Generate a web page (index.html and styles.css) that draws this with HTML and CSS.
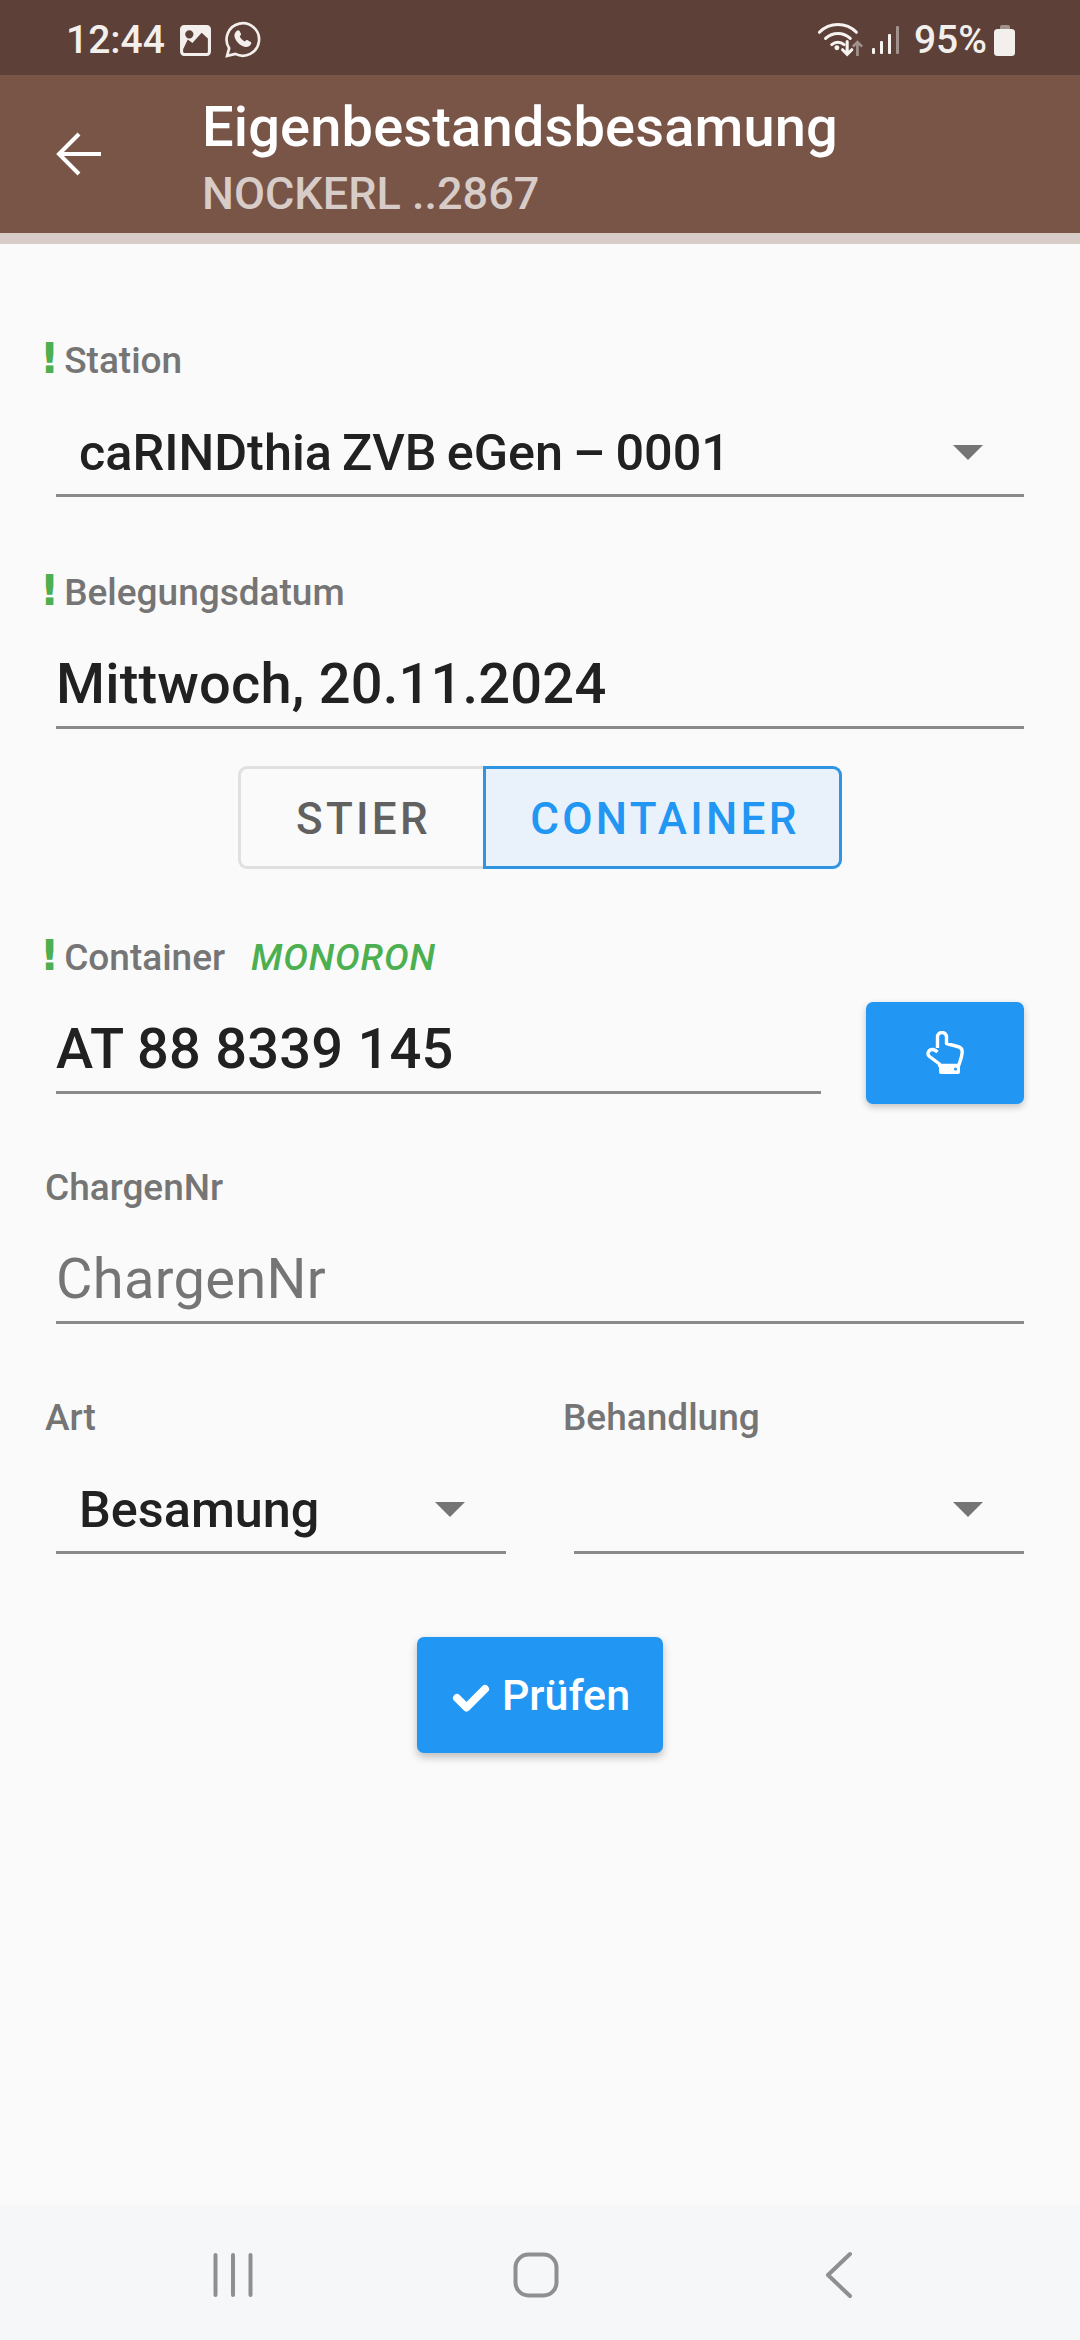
FILE: index.html
```html
<!DOCTYPE html>
<html lang="en">
<head>
    <meta charset="UTF-8">
    <meta name="viewport" content="width=device-width, initial-scale=1.0">
    <title>Eigenbestandsbesamung</title>
    <link rel="stylesheet" href="styles.css">
</head>
<body>
    <div class="phone">
        <!-- Status bar -->
        <div class="status-bar">
            <div class="status-left">
                <span class="clock">12:44</span>
                <svg class="status-icon" width="33" height="33" viewBox="0 0 32 32">
                    <path fill="#f3efed" fill-rule="evenodd" d="M5 1h22a4 4 0 0 1 4 4v22a4 4 0 0 1-4 4H5a4 4 0 0 1-4-4V5a4 4 0 0 1 4-4zM4 24.500V27a1 1 0 0 0 1 1h22a1 1 0 0 0 1-1v-13l-6-5.500-9 10-4.500-3.500zM10 6a4 4 0 1 0 0 8 4 4 0 0 0 0-8z"/>
                </svg>
                <svg class="status-icon" width="37" height="38" viewBox="0 0 36 37">
                    <path fill="none" stroke="#f3efed" stroke-width="2.600" d="M3 34l2-7.500A15.800 15.800 0 1 1 11 32z"/>
                    <path fill="#f3efed" d="M12.500 9.500c1-.8 2-.7 2.500 0l1.500 3c.3.700 0 1.300-1.200 2.700 1 2 2.700 3.700 5 4.800 1.500-1.500 2-1.700 2.700-1.300l3 1.700c.7.400.7 1.300.2 2.300-1 2-3.500 3-6 2.300-5-1.300-9-5.500-10-10-.4-2 .6-4 2.300-5.500z"/>
                </svg>
            </div>
            <div class="status-right">
                <svg width="48" height="37" viewBox="0 0 46 36">
                    <g fill="none" stroke="#f6f3f1" stroke-width="3" stroke-linecap="round">
                        <path d="M2 10C12 0 28 0 38 10"/>
                        <path d="M8 16c7-6.500 17-6.500 24 0"/>
                        <path d="M14 22c3.500-3 8.500-3 12 0"/>
                        <path d="M29 19v12M24.500 27l4.500 4.500 4.500-4.500"/>
                    </g>
                    <circle cx="19" cy="25" r="2.400" fill="#f6f3f1"/>
                    <path fill="none" stroke="#a1928c" stroke-width="2.600" d="M39 33V20M34.500 24l4.500-4.500 4.500 4.500"/>
                </svg>
                <svg class="signal" width="28" height="30" viewBox="0 0 28 30">
                    <rect x="1" y="23" width="3" height="6" rx="1" fill="#f6f3f1"/>
                    <rect x="9" y="16" width="3" height="13" rx="1" fill="#f6f3f1"/>
                    <rect x="17" y="9" width="3" height="20" rx="1" fill="#f6f3f1"/>
                    <rect x="25" y="1" width="3" height="28" rx="1" fill="#a1928c"/>
                </svg>
                <span class="battery-text">95%</span>
                <svg class="battery" width="22" height="32" viewBox="0 0 22 32">
                    <path fill="#a1928c" d="M6 3a2 2 0 0 1 2-2h6a2 2 0 0 1 2 2v3H6z"/>
                    <rect x="0" y="5" width="21" height="27" rx="3.500" fill="#f3efed"/>
                </svg>
            </div>
        </div>

        <!-- App bar -->
        <header class="app-bar">
            <svg class="back-icon" width="46" height="46" viewBox="0 0 46 46">
                <path fill="none" stroke="#fff" stroke-width="4" d="M45 23H4M23 3L3 23l20 20"/>
            </svg>
            <div class="app-titles">
                <h1>Eigenbestandsbesamung</h1>
                <p>NOCKERL ..2867</p>
            </div>
        </header>
        <div class="app-strip"></div>

        <main class="form">
            <div class="field field-wide-gap">
                <label class="field-label"><span class="required">!</span>Station</label>
                <div class="control select">
                    <span class="value">caRINDthia ZVB eGen – 0001</span>
                    <span class="arrow"></span>
                </div>
            </div>

            <div class="field field-wide-gap">
                <label class="field-label"><span class="required">!</span>Belegungsdatum</label>
                <div class="control">
                    <span class="value">Mittwoch, 20.11.2024</span>
                </div>
            </div>

            <div class="toggle">
                <button class="toggle-btn">STIER</button>
                <button class="toggle-btn active">CONTAINER</button>
            </div>

            <div class="field">
                <label class="field-label"><span class="required">!</span>Container<em class="hint">MONORON</em></label>
                <div class="control-row">
                    <div class="control">
                        <span class="value">AT 88 8339 145</span>
                    </div>
                    <button class="scan-btn">
                        <svg width="38" height="44" viewBox="0 0 38 44">
                            <path fill="none" stroke="#fff" stroke-width="3.400" stroke-linejoin="round" d="M11.500 17V6a4.500 4.500 0 0 1 9 0v6.500l11 3c3 .8 4.700 2.500 4.700 5 0 5-2 9-3.500 14H13.500V33L3.500 25.500c-3.200-2.700-.5-7.500 3.500-7 2 .3 3 1 4.500 2.500"/>
                            <path fill="#fff" fill-rule="evenodd" d="M13 34h21v7a2 2 0 0 1-2 2H15a2 2 0 0 1-2-2zm16.500 2.500a1.500 1.500 0 1 0 0 3 1.500 1.500 0 0 0 0-3z"/>
                        </svg>
                    </button>
                </div>
            </div>

            <div class="field">
                <label class="field-label">ChargenNr</label>
                <div class="control">
                    <span class="value placeholder">ChargenNr</span>
                </div>
            </div>

            <div class="field-pair">
                <div class="field">
                    <label class="field-label">Art</label>
                    <div class="control select">
                        <span class="value">Besamung</span>
                        <span class="arrow"></span>
                    </div>
                </div>
                <div class="field">
                    <label class="field-label">Behandlung</label>
                    <div class="control select">
                        <span class="value"></span>
                        <span class="arrow"></span>
                    </div>
                </div>
            </div>

            <div class="actions">
                <button class="check-btn">
                    <svg class="check-icon" width="38" height="30" viewBox="0 0 38 30">
                        <path fill="none" stroke="#fff" stroke-width="8" stroke-linecap="round" stroke-linejoin="round" d="M5 15l9.500 9.500L33 6"/>
                    </svg>
                    Prüfen
                </button>
            </div>
        </main>

        <!-- Navigation bar -->
        <nav class="nav-bar">
            <svg width="44" height="44" viewBox="0 0 44 44">
                <path fill="none" stroke="#8f8f8f" stroke-width="4" stroke-linecap="round" d="M4.500 2v40M22 2v40M39.500 2v40"/>
            </svg>
            <svg width="46" height="46" viewBox="0 0 46 46">
                <rect x="2.500" y="2.500" width="41" height="41" rx="13" fill="none" stroke="#8f8f8f" stroke-width="4"/>
            </svg>
            <svg width="30" height="48" viewBox="0 0 30 48">
                <path fill="none" stroke="#8f8f8f" stroke-width="4" stroke-linecap="round" stroke-linejoin="round" d="M26 3L4 24l22 21"/>
            </svg>
        </nav>
    </div>
</body>
</html>
```

FILE: styles.css
```css
/* General Styles */
html, body {
    margin: 0;
    padding: 0;
}

body {
    font-family: Roboto, "Noto Sans", sans-serif;
    background-color: #fafafa;
    color: #212121;
}

.phone {
    width: 1080px;
    height: 2340px;
    display: flex;
    flex-direction: column;
    overflow: hidden;
}

/* Status Bar */
.status-bar {
    height: 75px;
    box-sizing: border-box;
    background-color: #5d4037;
    color: #f3efed;
    display: flex;
    align-items: center;
    justify-content: space-between;
    padding: 5px 64px 0 66px;
    flex-shrink: 0;
}

.status-left,
.status-right {
    display: flex;
    align-items: center;
}

.clock {
    font-size: 39px;
    font-weight: 500;
    margin-right: 14px;
}

.status-icon {
    margin-right: 12px;
}

.signal {
    margin-left: 6px;
}

.battery-text {
    font-size: 39px;
    font-weight: 500;
    margin-left: 15px;
    margin-right: 7px;
}

/* App Bar */
.app-bar {
    height: 158px;
    background-color: #795548;
    display: flex;
    align-items: center;
    flex-shrink: 0;
    color: #fff;
}

.back-icon {
    margin-left: 56px;
    margin-right: 100px;
}

.app-titles {
    padding-top: 8px;
}

.app-titles h1 {
    margin: 0;
    font-size: 56px;
    font-weight: 500;
    line-height: 60px;
    letter-spacing: 0.15px;
}

.app-titles p {
    margin: 12px 0 0;
    font-size: 45px;
    font-weight: 500;
    line-height: 50px;
    color: #d7ccc8;
}

.app-strip {
    height: 11px;
    background-color: #d7ccc8;
    flex-shrink: 0;
}

/* Form */
.form {
    flex: 1;
    padding: 97px 56px 0 45px;
}

.field {
    margin-bottom: 74px;
}

.field-wide-gap {
    margin-bottom: 76px;
}

.field-label {
    display: flex;
    align-items: baseline;
    height: 40px;
    font-size: 37px;
    font-weight: 500;
    line-height: 40px;
    color: #757575;
}

.required {
    font-family: "DejaVu Sans", sans-serif;
    color: #4caf50;
    font-weight: 700;
    font-size: 42px;
    line-height: 30px;
    margin: 0 5px 0 -5px;
}

.hint {
    color: #4caf50;
    margin-left: 26px;
    font-style: italic;
    letter-spacing: 0.8px;
}

.control {
    height: 116px;
    margin-left: 11px;
    border-bottom: 3px solid #8a8a8a;
    box-sizing: border-box;
    display: flex;
    align-items: center;
    justify-content: space-between;
    padding-top: 31px;
    padding-bottom: 2px;
}

.value {
    font-size: 56px;
    font-weight: 500;
    letter-spacing: 0.2px;
}

.placeholder {
    color: #757575;
    font-weight: 400;
    letter-spacing: 0.3px;
}

.select .value {
    font-size: 50.4px;
    letter-spacing: 0;
    word-spacing: -2.500px;
    margin-left: 23px;
}

.arrow {
    width: 0;
    height: 0;
    border-left: 15px solid transparent;
    border-right: 15px solid transparent;
    border-top: 15px solid #757575;
    margin-right: 41px;
}

/* Toggle */
.toggle {
    display: flex;
    justify-content: center;
    margin: -39px 0 69px 11px;
}

.toggle-btn {
    height: 103px;
    font-family: inherit;
    font-size: 44px;
    font-weight: 500;
    letter-spacing: 3.300px;
    box-sizing: border-box;
    padding: 2px 0 0 3px;
    background-color: #fafafa;
    color: #616161;
    border: 3px solid #e0e0e0;
    border-right: none;
    border-radius: 9px 0 0 9px;
    width: 245px;
}

.toggle-btn.active {
    width: 359px;
    padding-left: 5px;
    color: #2196f3;
    background-color: #e9f2fa;
    border: 3px solid #2f95e3;
    border-radius: 0 9px 9px 0;
}

/* Container row */
.control-row {
    display: flex;
    align-items: flex-end;
    gap: 45px;
}

.control-row .control {
    flex: 1;
}

.scan-btn {
    width: 158px;
    height: 102px;
    border: none;
    border-radius: 7px;
    background-color: #2196f3;
    box-shadow: 0 3px 7px rgba(0, 0, 0, 0.22);
    display: flex;
    align-items: center;
    justify-content: center;
    margin-bottom: -10px;
    padding: 0;
}

/* Art / Behandlung */
.field-pair {
    display: grid;
    grid-template-columns: 461px 450px;
    gap: 57px;
}

.field-pair .field {
    margin-bottom: 0;
}

.field-pair .field:last-child .control {
    margin-right: -11px;
}

/* Pruefen Button */
.actions {
    display: flex;
    justify-content: center;
    margin: 83px 0 0 11px;
}

.check-btn {
    width: 246px;
    height: 116px;
    border: none;
    border-radius: 7px;
    background-color: #2196f3;
    color: #fff;
    font-family: inherit;
    font-size: 43px;
    font-weight: 500;
    box-shadow: 0 4px 9px rgba(0, 0, 0, 0.25);
    display: flex;
    align-items: center;
    justify-content: center;
    gap: 12px;
    padding: 0 0 0 2px;
}

.check-icon {
    margin-top: 6px;
}

/* Navigation Bar */
.nav-bar {
    height: 135px;
    box-sizing: border-box;
    background-color: #f6f7f9;
    flex-shrink: 0;
    display: flex;
    align-items: center;
    padding: 5px 0 0 211px;
}

.nav-bar svg:nth-child(2) {
    margin: 0 265px 0 258px;
}
```
